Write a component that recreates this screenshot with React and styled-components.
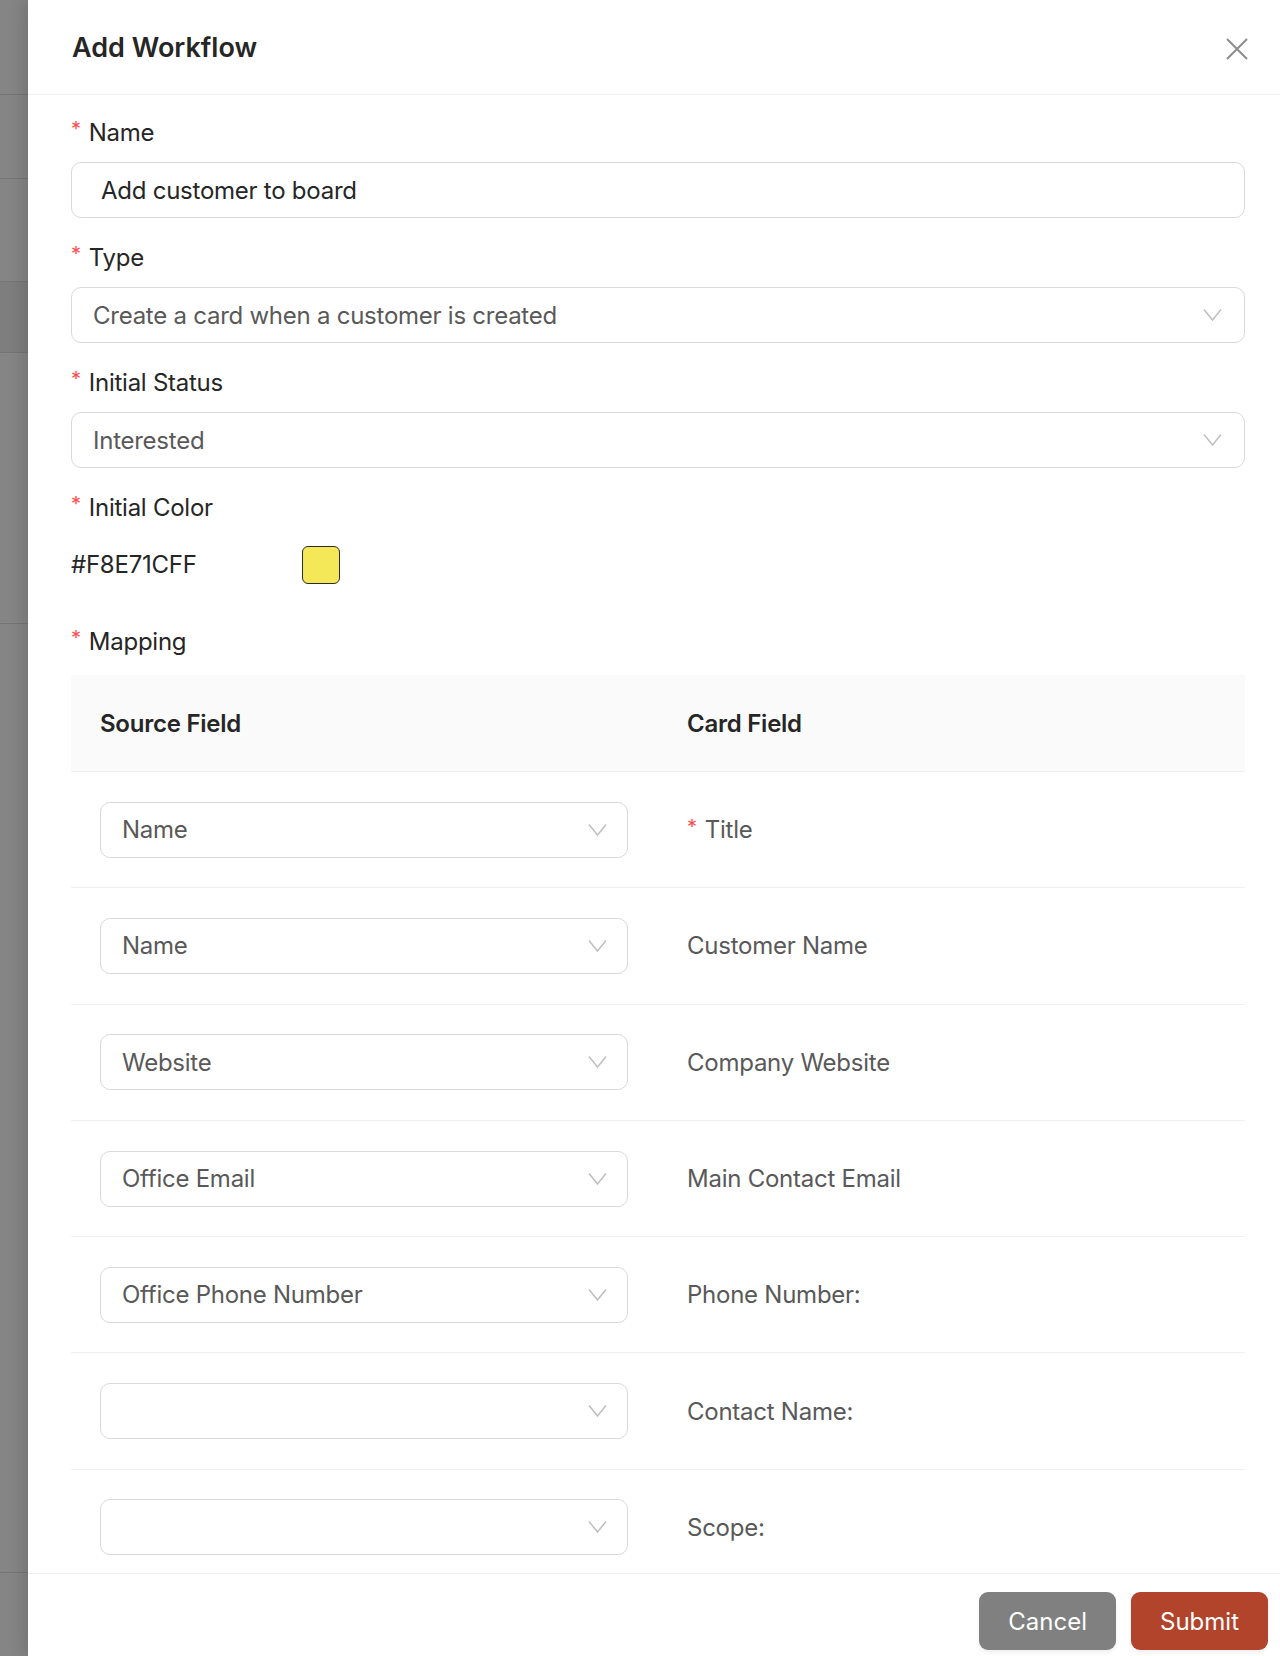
import React from "react";
import styled, { createGlobalStyle } from "styled-components";

const rows = [
  { source: "Name", card: "Title", required: true },
  { source: "Name", card: "Customer Name" },
  { source: "Website", card: "Company Website" },
  { source: "Office Email", card: "Main Contact Email" },
  { source: "Office Phone Number", card: "Phone Number:" },
  { source: "", card: "Contact Name:" },
  { source: "", card: "Scope:" },
];

const bgBands = [
  { h: 95 },
  { h: 84 },
  { h: 103 },
  { h: 71, dark: true },
  { h: 271 },
  { h: 949 },
];

function Chevron() {
  return (
    <svg width="19" height="14" viewBox="0 0 19 14" fill="none">
      <path d="M1 1.5 L9.5 12 L18 1.5" stroke="#bfbfbf" strokeWidth="1.5" />
    </svg>
  );
}

function Select({ value, compact }) {
  return (
    <SelectBox $compact={compact}>
      <span>{value}</span>
      <Chevron />
    </SelectBox>
  );
}

export default function App() {
  return (
    <>
      <GlobalStyle />
      <Page>
        <Backdrop>
          {bgBands.map((b, i) => (
            <Band key={i} $h={b.h} $dark={b.dark} />
          ))}
        </Backdrop>

        <Drawer>
          <Header>
            <Title>Add Workflow</Title>
            <Close aria-label="close">
              <svg width="22" height="22" viewBox="0 0 22 22">
                <path d="M1 1 L21 21 M21 1 L1 21" stroke="#8c8c8c" strokeWidth="2" />
              </svg>
            </Close>
          </Header>

          <Body>
            <Label>Name</Label>
            <Input>Add customer to board</Input>

            <Label>Type</Label>
            <Select value="Create a card when a customer is created" />

            <Label>Initial Status</Label>
            <Select value="Interested" />

            <Label>Initial Color</Label>
            <ColorRow>
              <ColorText>#F8E71CFF</ColorText>
              <Swatch $color="#f5e858" />
            </ColorRow>

            <Label>Mapping</Label>
            <Table>
              <HeadRow>
                <HeadCell>Source Field</HeadCell>
                <HeadCell>Card Field</HeadCell>
              </HeadRow>
              {rows.map((r, i) => (
                <Row key={i}>
                  <Cell>
                    <Select value={r.source} compact />
                  </Cell>
                  <Cell>
                    <CardField $required={r.required}>{r.card}</CardField>
                  </Cell>
                </Row>
              ))}
            </Table>
          </Body>

          <Footer>
            <Button $bg="#808080">Cancel</Button>
            <Button $bg="#b1442b">Submit</Button>
          </Footer>
        </Drawer>
      </Page>
    </>
  );
}

const GlobalStyle = createGlobalStyle`
  html, body {
    margin: 0;
    padding: 0;
    background: #ffffff;
    font-family: Inter, "Noto Sans", sans-serif;
    letter-spacing: -0.25px;
  }
  * {
    box-sizing: border-box;
  }
`;

const Page = styled.div`
  display: flex;
  width: 1280px;
  height: 1656px;
  overflow: hidden;
`;

const Backdrop = styled.div`
  width: 28px;
  flex-shrink: 0;
  background: #858585;
  display: flex;
  flex-direction: column;
`;

const Band = styled.div`
  height: ${(p) => p.$h}px;
  flex-shrink: 0;
  background: ${(p) => (p.$dark ? "#7e7e7e" : "transparent")};
  border-bottom: 1px solid #757575;
`;

const Drawer = styled.div`
  flex: 1;
  display: flex;
  flex-direction: column;
  background: #ffffff;
  box-shadow: -6px 0 14px rgba(0, 0, 0, 0.12);
  min-width: 0;
`;

const Header = styled.header`
  height: 95px;
  flex-shrink: 0;
  display: flex;
  align-items: center;
  justify-content: space-between;
  padding: 0 32px 0 44px;
  border-bottom: 1px solid #f0f0f0;
`;

const Title = styled.h1`
  margin: 0;
  font-size: 27px;
  font-weight: 600;
  letter-spacing: 0;
  color: #262626;
`;

const Close = styled.button`
  border: none;
  background: none;
  padding: 0;
  margin-top: 4px;
  display: flex;
`;

const Body = styled.div`
  flex: 1;
  min-height: 0;
  overflow: hidden;
  padding: 15px 35px 0 43px;
  display: flex;
  flex-direction: column;

  & > * {
    flex-shrink: 0;
  }
`;

const Label = styled.div`
  height: 44px;
  display: flex;
  align-items: center;
  font-size: 24px;
  color: #262626;

  &::before {
    content: "*";
    color: #ff4d4f;
    font-size: 20px;
    margin-right: 8px;
    margin-top: -6px;
  }

  & + * {
    margin-top: 8px;
  }
`;

const Input = styled.div`
  height: 56px;
  display: flex;
  align-items: center;
  padding: 0 29px;
  border: 1px solid #d9d9d9;
  border-radius: 10px;
  font-size: 24px;
  color: #262626;
  margin-bottom: 17px;
`;

const SelectBox = styled.div`
  height: 56px;
  display: flex;
  align-items: center;
  justify-content: space-between;
  padding: 0 ${(p) => (p.$compact ? "20px" : "22px")} 0 21px;
  border: 1px solid #d9d9d9;
  border-radius: 10px;
  font-size: 24px;
  color: #595959;
  margin-bottom: ${(p) => (p.$compact ? "0" : "17px")};
  background: #ffffff;
`;

const ColorRow = styled.div`
  height: 55px;
  display: flex;
  align-items: center;
  font-size: 24px;
  color: #262626;
  margin-bottom: 27px;
`;

const ColorText = styled.span`
  width: 231px;
`;

const Swatch = styled.div`
  width: 38px;
  height: 38px;
  border-radius: 6px;
  border: 1px solid #2b2b2b;
  background: ${(p) => p.$color};
`;

const Table = styled.div`
  margin-top: 12px !important;
  display: flex;
  flex-direction: column;
`;

const HeadRow = styled.div`
  display: grid;
  grid-template-columns: 1fr 1fr;
  height: 97px;
  flex-shrink: 0;
  background: #fafafa;
  border-bottom: 1px solid #f0f0f0;
`;

const HeadCell = styled.div`
  display: flex;
  align-items: center;
  padding: 0 29px;
  font-size: 24px;
  font-weight: 600;
  color: #262626;
`;

const Row = styled.div`
  display: grid;
  grid-template-columns: 1fr 1fr;
  height: 116.3px;
  flex-shrink: 0;
  border-bottom: 1px solid #f0f0f0;
`;

const Cell = styled.div`
  display: flex;
  align-items: center;
  padding: 0 30px 0 29px;

  & > div {
    flex: 1;
  }
`;

const CardField = styled.span`
  font-size: 24px;
  color: #595959;

  &::before {
    content: ${(p) => (p.$required ? '"*"' : "none")};
    color: #ff4d4f;
    font-size: 20px;
    margin-right: 8px;
    vertical-align: 4px;
  }
`;

const Footer = styled.footer`
  height: 83px;
  flex-shrink: 0;
  border-top: 1px solid #f0f0f0;
  display: flex;
  justify-content: flex-end;
  align-items: flex-start;
  gap: 15px;
  padding: 18px 12px 0 0;
`;

const Button = styled.button`
  height: 58px;
  padding: 0 29px;
  border: none;
  border-radius: 9px;
  background: ${(p) => p.$bg};
  color: #ffffff;
  font-family: Inter, "Noto Sans", sans-serif;
  font-size: 24px;
  letter-spacing: 0;
  box-shadow: 0 3px 4px rgba(0, 0, 0, 0.06);
`;
